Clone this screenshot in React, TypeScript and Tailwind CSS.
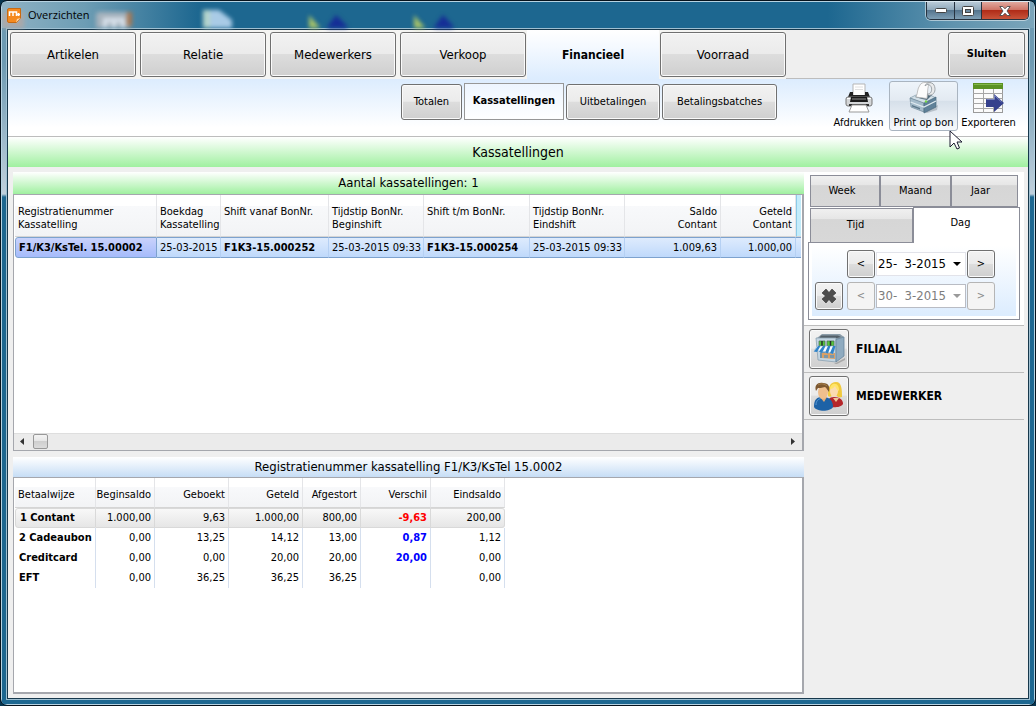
import { useState } from 'react'
import clsx from 'clsx'

const mainTabs = ['Artikelen', 'Relatie', 'Medewerkers', 'Verkoop', 'Financieel', 'Voorraad']

const subTabs = [
  { label: 'Totalen', width: 'w-[61px]' },
  { label: 'Kassatellingen', width: 'w-[100px]' },
  { label: 'Uitbetalingen', width: 'w-[94px]' },
  { label: 'Betalingsbatches', width: 'w-[115px]' },
]

const shiftColumns = [
  { lines: ['Registratienummer', 'Kassatelling'], width: 'w-[142px]', right: false },
  { lines: ['Boekdag', 'Kassatelling'], width: 'w-[64px]', right: false },
  { lines: ['Shift vanaf BonNr.'], width: 'w-[108px]', right: false },
  { lines: ['Tijdstip BonNr.', 'Beginshift'], width: 'w-[95px]', right: false },
  { lines: ['Shift t/m BonNr.'], width: 'w-[106px]', right: false },
  { lines: ['Tijdstip BonNr.', 'Eindshift'], width: 'w-[95px]', right: false },
  { lines: ['Saldo', 'Contant'], width: 'w-[96px]', right: true },
  { lines: ['Geteld', 'Contant'], width: 'w-[75px]', right: true },
]

const shift = [
  'F1/K3/KsTel. 15.00002',
  '25-03-2015',
  'F1K3-15.000252',
  '25-03-2015 09:33',
  'F1K3-15.000254',
  '25-03-2015 09:33',
  '1.009,63',
  '1.000,00',
]

const payColumns = [
  { label: 'Betaalwijze', width: 'w-[81px]' },
  { label: 'Beginsaldo', width: 'w-[59px]' },
  { label: 'Geboekt', width: 'w-[74px]' },
  { label: 'Geteld', width: 'w-[74px]' },
  { label: 'Afgestort', width: 'w-[58px]' },
  { label: 'Verschil', width: 'w-[70px]' },
  { label: 'Eindsaldo', width: 'w-[74px]' },
]

const payRows = [
  ['1 Contant', '1.000,00', '9,63', '1.000,00', '800,00', '-9,63', '200,00'],
  ['2 Cadeaubon', '0,00', '13,25', '14,12', '13,00', '0,87', '1,12'],
  ['Creditcard', '0,00', '0,00', '20,00', '20,00', '20,00', '0,00'],
  ['EFT', '0,00', '36,25', '36,25', '36,25', '', '0,00'],
]

const bevel =
  'rounded-[3px] border border-[#707070] bg-[linear-gradient(#f2f2f2,#ebebeb_48%,#dddddd_50%,#cfcfcf)] shadow-[inset_0_0_0_1px_#fafafa]'

function AppLogo() {
  return (
    <svg width="15" height="15" viewBox="0 0 15 15" aria-hidden="true">
      <path d="M2 .5h11.5v9.5l-4 4.5H2A1.5 1.5 0 0 1 .5 13V2A1.5 1.5 0 0 1 2 .5z" fill="#f58a1f" stroke="#c96a10" />
      <path d="M2.500 8V4h7v4M6 4v4M9.500 6.500H13M11.500 5v3" fill="none" stroke="#fff" strokeWidth="1.500" />
      <path d="M9 14.500 10 11l3.500-1z" fill="#ffd9a8" />
    </svg>
  )
}

// Desktop icons that shine through the glass title bar
function GlassBackdrop() {
  return (
    <svg className="absolute inset-x-0 top-0 h-full w-full blur-[2px]" aria-hidden="true">
      <rect x="0" y="10" width="22" height="20" fill="#b9a6a0" opacity=".7" />
      <path d="M94 28V13q0-3 4-3h26q4 0 4 4v14" fill="#a7b3bd" />
      <path d="M125 10h5v14h-5z" fill="#a8764f" />
      <path d="M103 28V18h18v10M112 18v10" fill="none" stroke="#dbe4ee" strokeWidth="4" />
      <path d="M201 28V8h16l13 10v10z" fill="#a9cbe6" />
      <path d="M201 28V8h7v20z" fill="#b5d5cc" />
      <path d="M307 13l13 15h-13z" fill="#a9c468" />
      <path d="M323 28l11-15 12 12-5 3z" fill="#152d96" />
      <path d="M412 13l13 15h-13z" fill="#a9c468" />
      <path d="M430 28l11-15 11 12-4 3z" fill="#152d96" />
    </svg>
  )
}

function PrinterIcon() {
  return (
    <svg width="28" height="30" viewBox="0 0 28 30" aria-hidden="true">
      <path d="M8 1h12v12H8z" fill="#fff" stroke="#b5b5b5" />
      <path d="M10 4h8M10 6.500h8" stroke="#e0e0e0" />
      <path d="M5 9h3v3h12V9h3l2 5H3z" fill="#222" />
      <rect x="1" y="14" width="26" height="9" rx="2" fill="#d4d6d8" stroke="#777" />
      <path d="M2 15.500h24" stroke="#fff" />
      <path d="M6 14h16l1 5H5z" fill="#1b1b1b" />
      <path d="M7 16h14" stroke="#8d8d8d" />
      <path d="M4 21h20v2H4z" fill="#333" />
      <path d="M7 22h14l3 7H4z" fill="#fff" stroke="#999" />
    </svg>
  )
}

function ReceiptPrinterIcon() {
  return (
    <svg width="30" height="32" viewBox="0 0 30 32" aria-hidden="true">
      <path d="M15 30l14-7-1 5-10 3z" fill="#8c98a1" opacity=".5" />
      <path d="M1 16l6-3h14l6 3-11 6z" fill="#d3e0e8" stroke="#8199a8" strokeWidth=".7" />
      <path d="M6 15l3-2h14l-5 5-5-1z" fill="#516b7b" />
      <path d="M1 16l14 5v9L2 25z" fill="#a5bccb" stroke="#6d8798" strokeWidth=".7" />
      <path d="M15 21l12-6v10l-12 6z" fill="#5f8199" stroke="#4b6a7e" strokeWidth=".7" />
      <path d="M1.500 20l13.500 5 12-6" fill="none" stroke="#dfeaf0" strokeWidth="1.200" />
      <path d="M3 23l8 3v1.500l-8-3z" fill="#5c7889" />
      <path d="M7 15c2-4 1-8 4-12 1-2 3-2.500 5-2.500h6c-4 2-3 9-4 16z" fill="#fcfcfc" stroke="#b3b3b3" strokeWidth=".8" />
      <path d="M16 4c1-4 7-4.500 9-1 2 4 1 9-3 10-2 .5-3 0-4-1 4 0 5-3 4.500-6-.5-3-4-5-6.500-2z" fill="#e9eaeb" stroke="#979da1" strokeWidth=".9" />
      <circle cx="17" cy="19.500" r="1.200" fill="#75d64a" />
    </svg>
  )
}

function ExportIcon() {
  return (
    <svg width="31" height="31" viewBox="0 0 31 31" aria-hidden="true">
      <rect x=".5" y=".5" width="29" height="29" fill="#fbfbfb" stroke="#9a9a9a" />
      <rect x="0" y="0" width="30" height="6" fill="#5b9222" />
      <path d="M1 1.500h28" stroke="#82b648" />
      <path d="M0 10.500h30M0 15.500h30M0 20.500h30M0 25.500h30M10.500 6v24M20.500 6v24" stroke="#a6a6a6" />
      <path d="M13 16h8v-5l10 9-10 9v-5h-8z" fill="#35408c" />
      <path d="M13.500 16.500h8v-4l7 6.500" fill="none" stroke="#7680bd" />
    </svg>
  )
}

function StoreIcon() {
  return (
    <svg width="32" height="32" viewBox="0 0 32 32" aria-hidden="true">
      <path d="M21 31l11-6v2l-8 4z" fill="#8a8a8a" opacity=".6" />
      <path d="M4 5l5-4h18l4 3-8 3z" fill="#8b9ca8" />
      <path d="M8 2.500h17l3 1.500-6 1.500H6z" fill="#535f68" />
      <path d="M3 5h20v24L5 27z" fill="#c3d5e2" stroke="#8aa1b1" strokeWidth=".8" />
      <path d="M23 6.500l8-2.500v19l-8 6z" fill="#8fabc0" stroke="#68879c" strokeWidth=".8" />
      <path d="M6 8h6v5H6zM14 8h7v5h-7z" fill="#57c63b" stroke="#4a6b58" strokeWidth=".7" />
      <path d="M9 8v5M17.500 8v5" stroke="#25302a" strokeWidth="1.500" />
      <path d="M7 18h5v7H7z" fill="#7393a8" />
      <path d="M9 20h13v6l-13-1z" fill="#d9a066" />
      <path d="M11 22h4v3h-4zM17 22h4v3h-4z" fill="#7d98a9" />
      <path d="M4 13h18l-2 8-3-1.500-3 .5-3-1.500-3 1-3-2-4 1z" fill="#f7fbff" stroke="#7ea7c8" strokeWidth=".5" />
      <path d="M5 13h2.500L4 19l-3-.5zM10 13h2.500L9 20l-3-1.500zM15 13h2.500L15 20.500l-3-1zM20 13h2.500L20 21l-3-1z" fill="#2f83c9" />
    </svg>
  )
}

function PeopleIcon() {
  return (
    <svg width="32" height="30" viewBox="0 0 32 30" aria-hidden="true">
      <path d="M14 25c0-6 2-9 7-9 6 0 9 3 9 7-2 4-12 4-16 2z" fill="#b5262a" />
      <path d="M20 17l3 4 3-4z" fill="#f1c897" />
      <path d="M15 15c0-9 2-14 8-14s6 8 6 15c-3 1-4 0-5-1h-5c-1 1-3 1-4 0z" fill="#f0c93d" />
      <ellipse cx="21" cy="10" rx="4" ry="6" fill="#fbdcb0" />
      <path d="M17 8c0-5 6-7 8-3 1 2 1 3 1 5-2-1-3-3-4-5-1 2-3 3-5 3z" fill="#ffe468" />
      <path d="M1 26c0-7 2-10 9-10s10 4 10 10c-3 5-16 5-19 0z" fill="#1d62a6" />
      <path d="M3 24c0-4 2-6 6-7" fill="none" stroke="#5c9bd6" />
      <path d="M7 16l4 5 3-5z" fill="#e5ad76" />
      <ellipse cx="10" cy="11" rx="5" ry="7" fill="#efbf8d" />
      <path d="M3 10C1 4 5 1 10 2c6 0 7 4 6 9-2-2-2-4-4-5-3 1-6 1-7 1z" fill="#7d5830" />
      <path d="M5 4c3-2 7-1 9 1" fill="none" stroke="#a8814c" />
    </svg>
  )
}

function ClearIcon() {
  return (
    <svg width="14" height="14" viewBox="0 0 14 14" aria-hidden="true">
      <path d="M4 0l3 3.500L10 0l4 4-3.500 3L14 10l-4 4-3-3.500L4 14l-4-4 3.500-3L0 4z" fill="#4d4d4d" stroke="#333" strokeWidth=".6" />
    </svg>
  )
}

function Pointer() {
  return (
    <svg className="pointer-events-none absolute top-[48px] left-[59px] z-10" width="13" height="20" viewBox="0 0 13 20" aria-hidden="true">
      <path d="M1 1v16l4-4 3 6 2.500-1L8 12h5z" fill="#fff" stroke="#1c1c30" />
    </svg>
  )
}

function TitleBar() {
  return (
    <header className="relative flex h-[26px] shrink-0 items-start justify-between bg-[linear-gradient(90deg,#8fb2c4,#6d9db4_8%,#1d6790_19%,#1d6790_80%,#5f93ae_92%,#7ba5ba)]">
      <GlassBackdrop />
      <div className="relative flex h-full items-center gap-1.5 pl-[5px] font-['Open_Sans','Noto_Sans',sans-serif] text-[11px] text-black">
        <AppLogo />
        <h1>Overzichten</h1>
      </div>
      <div className="relative mr-[5px] flex h-[18px] overflow-hidden rounded-b-[5px] border border-t-0 border-[#26323f] shadow-[0_0_0_1px_#ffffff80]">
        <button aria-label="Minimaliseren" className="flex w-[28px] items-center justify-center border-r border-[#26323f] bg-[linear-gradient(#b9cbd8,#90a9bb_45%,#55758e_50%,#7f9fb5)]">
          <svg width="12" height="5" viewBox="0 0 12 5"><rect x=".5" y=".5" width="11" height="4" rx="1" fill="#fff" stroke="#444" /></svg>
        </button>
        <button aria-label="Maximaliseren" className="flex w-[27px] items-center justify-center border-r border-[#26323f] bg-[linear-gradient(#b9cbd8,#90a9bb_45%,#55758e_50%,#7f9fb5)]">
          <svg width="12" height="10" viewBox="0 0 12 10">
            <rect x=".5" y=".5" width="11" height="9" rx="1" fill="#fff" stroke="#444" />
            <rect x="3.500" y="3.500" width="5" height="3" fill="#6d8aa0" stroke="#444" />
          </svg>
        </button>
        <button aria-label="Venster sluiten" className="flex w-[46px] items-center justify-center bg-[linear-gradient(#e0a99f,#cf7567_45%,#b02c18_50%,#c8543a)]">
          <svg width="12" height="10" viewBox="0 0 12 10">
            <path d="M.8.5h3L6 2.800 8.200.5h3L8 5l3.200 4.500h-3L6 7.200 3.800 9.500h-3L4 5z" fill="#fff" stroke="#4a4a4a" strokeWidth=".9" />
          </svg>
        </button>
      </div>
    </header>
  )
}

function ToolButton({ label, icon, hover }: { label: string; icon: React.ReactNode; hover?: boolean }) {
  return (
    <button
      className={clsx(
        'relative flex h-[50px] flex-col items-center justify-between rounded-[3px] border text-[11px] leading-[15px] whitespace-nowrap',
        hover ? 'w-[69px] border-[#a9b4c0] bg-[linear-gradient(#eef4fa,#e3eaf2_38%,#d6e0ea_40%,#f6f9fc)]' : 'w-[61px] border-transparent pt-px',
      )}
    >
      {icon}
      <span>{label}</span>
      {hover && <Pointer />}
    </button>
  )
}

function ShiftTable() {
  return (
    <div className="flex min-h-0 flex-1 flex-col border border-r-2 border-[#a5a7ad] bg-white">
      <div className="min-h-0 flex-1 overflow-hidden px-px">
        <table className="w-full table-fixed border-separate border-spacing-0 text-[11px] leading-[13px]">
          <thead>
            <tr className="h-[42px] bg-[linear-gradient(#fff_25%,#f8f9fb_26%,#f2f3f5)]">
              {shiftColumns.map((col, i) => (
                <th
                  key={i}
                  className={clsx(
                    col.width,
                    'border-r border-b border-r-[#e4e5e8] border-b-[#d5d5d5] px-[3px] pt-2.5 align-top font-normal whitespace-nowrap',
                    col.right ? 'text-right' : 'text-left',
                  )}
                >
                  {col.lines.map((line) => (
                    <div key={line}>{line}</div>
                  ))}
                </th>
              ))}
              <th className="border-b border-l border-b-[#d5d5d5] border-l-[#8ccbe8] bg-[#c3ecfb]" />
            </tr>
          </thead>
          <tbody>
            <tr className="h-[21px]">
              {shift.map((value, i) => (
                <td
                  key={i}
                  className={clsx(
                    'border-y border-r border-y-[#7da2ce] px-[3px] whitespace-nowrap',
                    i === 0
                      ? 'rounded-l-[3px] border-l border-l-[#7da2ce] border-r-[#7da2ce] bg-[linear-gradient(#c9d2fb,#a5bbfb)]'
                      : 'border-r-[#b5d0f3] bg-[linear-gradient(#deebfd,#bfd9fb)]',
                    (i === 0 || i === 2 || i === 4) && 'font-bold',
                    i >= 6 && 'text-right',
                  )}
                >
                  {value}
                </td>
              ))}
              <td className="border-y border-[#7da2ce] bg-[linear-gradient(#deebfd,#bfd9fb)]" />
            </tr>
          </tbody>
        </table>
      </div>
      <div className="flex h-[17px] items-center justify-between border-t border-[#dedede] bg-[#ebebeb] px-1.5">
        <div className="flex items-center gap-2">
          <button aria-label="Naar links" className="flex h-4 w-[5px] items-center">
            <svg width="4" height="7" viewBox="0 0 4 7"><path d="M4 0v7L0 3.500z" fill="#333" /></svg>
          </button>
          <div className="h-[15px] w-[15px] rounded-[2px] border border-[#989898] bg-[linear-gradient(#f4f4f4,#e6e6e6_48%,#cfcfcf_50%,#dcdcdc)]" />
        </div>
        <button aria-label="Naar rechts" className="flex h-4 w-[5px] items-center">
          <svg width="4" height="7" viewBox="0 0 4 7"><path d="M0 0v7l4-3.500z" fill="#333" /></svg>
        </button>
      </div>
    </div>
  )
}

function PaymentTable() {
  return (
    <div className="min-h-0 flex-1 overflow-hidden border border-r-2 border-b-2 border-[#a5a7ad] bg-white px-px">
      <table className="w-[490px] table-fixed border-separate border-spacing-0 text-[11px] leading-[13px]">
        <thead>
          <tr className="h-[30px] bg-[linear-gradient(#fff_30%,#f8f9fb_31%,#f2f3f5)]">
            {payColumns.map((col, i) => (
              <th
                key={col.label}
                className={clsx(
                  col.width,
                  'border-r border-b border-r-[#e4e5e8] border-b-[#d5d5d5] pt-1 pr-[3px] font-normal whitespace-nowrap',
                  i === 0 ? 'pl-[3px] text-left' : 'text-right',
                )}
              >
                {col.label}
              </th>
            ))}
          </tr>
        </thead>
        <tbody>
          {payRows.map((row, r) => (
            <tr key={row[0]} className="h-[20px]">
              {row.map((value, i) => (
                <td
                  key={i}
                  className={clsx(
                    'border-r pr-[3px] whitespace-nowrap',
                    i === 0 ? 'pl-1 text-left font-bold' : 'text-right',
                    i === 5 && (value.startsWith('-') ? 'font-bold text-[#ff0000]' : 'font-bold text-[#0000ff]'),
                    r === 0
                      ? 'border-y border-[#d9d9d9] bg-[linear-gradient(#f8f8f8,#e6e6e6)] first:rounded-l-[3px] first:border-l last:rounded-r-[3px]'
                      : 'border-[#d5dfee]',
                  )}
                >
                  {value}
                </td>
              ))}
            </tr>
          ))}
        </tbody>
      </table>
    </div>
  )
}

function DateRow({ label, value, disabled }: { label: string; value: string; disabled?: boolean }) {
  const [date, setDate] = useState(value)
  const step = clsx(
    'h-7 w-7 shrink-0 rounded-[3px] border text-[11px]',
    disabled ? 'border-[#b5b5b5] bg-[#f4f4f4] text-[#8a8a8a]' : bevel,
  )
  return (
    <div className="flex items-center gap-px">
      <button className={step} disabled={disabled} aria-label={`${label} eerder`}>&lt;</button>
      <div className={clsx('flex h-6 w-[90px] items-center border bg-white', disabled ? 'border-[#b9bcc4]' : 'border-[#e2e3ea]')}>
        <input
          aria-label={label}
          value={date}
          disabled={disabled}
          onChange={(e) => setDate(e.target.value)}
          className="w-[76px] bg-transparent pl-px text-[13px] text-black outline-none disabled:text-[#7d7d7d]"
        />
        <button disabled={disabled} aria-label={`${label} kiezen`} className="text-black disabled:text-[#9a9a9a]">
          <svg width="8" height="4" viewBox="0 0 8 4"><path d="M0 0h8L4 4z" fill="currentColor" /></svg>
        </button>
      </div>
      <button className={step} disabled={disabled} aria-label={`${label} later`}>&gt;</button>
    </div>
  )
}

function PeriodPanel() {
  const tab = 'border border-[#8b8d98] bg-[linear-gradient(#f0f0f0,#e6e6e6_30%,#d6d6d6_32%,#d8d8d8)] text-[11px]'
  return (
    <section className="border-b border-[#bdbdbd] bg-white pt-[3px] pr-1 pb-[5px] pl-1">
      <div role="tablist" className="ml-0.5">
        <div className="mr-0.5 flex h-[32px]">
          <button role="tab" className={clsx(tab, 'w-[71px] border-r-2 pr-1.5')}>Week</button>
          <button role="tab" className={clsx(tab, 'w-[71px] border-r-2 border-l-0')}>Maand</button>
          <button role="tab" className={clsx(tab, 'flex-1 border-l-0 pr-2')}>Jaar</button>
        </div>
        <div className="flex h-[35px] items-end">
          <button role="tab" className={clsx(tab, 'h-[34px] w-[103px] border-b-0 pr-3')}>Tijd</button>
          <button role="tab" aria-selected="true" className="z-10 -mb-px h-[36px] flex-1 border border-b-0 border-[#8b8d98] bg-white pr-3 pb-1 text-[11px]">
            Dag
          </button>
        </div>
      </div>
      <div className="border border-[#8b8d98] p-[3px]">
        <div className="flex items-end gap-1 bg-[linear-gradient(#fff,#dcecfe)] pt-1 pb-1.5 pl-[3px]">
          <button aria-label="Datum wissen" className={clsx(bevel, 'flex h-7 w-7 items-center justify-center')}>
            <ClearIcon />
          </button>
          <div className="flex flex-col gap-1">
            <DateRow label="Begindatum" value="25-  3-2015" />
            <DateRow label="Einddatum" value="30-  3-2015" disabled />
          </div>
        </div>
      </div>
    </section>
  )
}

function FilterRow({ label, icon }: { label: string; icon: React.ReactNode }) {
  return (
    <div className="flex h-[47px] items-center gap-[7px] border-b border-[#bdbdbd] pl-[5px] text-[12px] font-bold">
      <button aria-label={label} className={clsx(bevel, 'flex h-10 w-10 items-center justify-center')}>
        {icon}
      </button>
      <span>{label}</span>
    </div>
  )
}

export default function App() {
  const [activeMain, setActiveMain] = useState('Financieel')
  const [activeSub, setActiveSub] = useState('Kassatellingen')

  return (
    <div className="h-screen bg-[#07354f] font-['DejaVu_Sans_Condensed','DejaVu_Sans',sans-serif] text-black">
      <div className="flex h-full flex-col overflow-hidden rounded-[7px] border border-[#06121c] bg-[#1d6790] shadow-[inset_0_0_0_1px_#b7d3e2]">
        <div className="m-px flex min-h-0 flex-1 flex-col bg-[linear-gradient(#6d9ab2,#6d9ab2_60px,#c0d0dc_192px,#1d6790_195px)]">
          <TitleBar />
          <div className="mx-1 mb-1 flex min-h-0 flex-1 flex-col border border-[#9fc0d2]">
            <main className="flex min-h-0 flex-1 flex-col border border-[#17384c] bg-[#efefef]">
              <nav className="flex h-[49px] shrink-0 bg-[#efefef]">
                <div className="flex items-start gap-1 bg-[#f4f4f2] pt-0.5 pl-0.5">
                  {mainTabs.map((label) =>
                    label === activeMain ? (
                      <button key={label} className="-mx-[3px] -mt-0.5 h-[49px] w-[132px] bg-[linear-gradient(#fff,#f4f9ff_35%,#dcecfe)] text-[12px] font-bold">
                        {label}
                      </button>
                    ) : (
                      <button key={label} onClick={() => setActiveMain(label)} className={clsx(bevel, 'h-[45px] w-[126px] text-[13px]')}>
                        {label}
                      </button>
                    ),
                  )}
                </div>
                <div className="flex flex-1 justify-end border-b border-[#bdbdbd] pt-0.5 pr-[3px]">
                  <button className={clsx(bevel, 'h-[45px] w-[77px] text-[11px] font-bold')}>Sluiten</button>
                </div>
              </nav>

              <div className="flex h-[58px] shrink-0 items-start justify-between border-b border-[#bdbdbd] bg-[linear-gradient(#dcecfe,#fff_85%)] pl-[393px]">
                <div className="flex items-end gap-0.5 pt-1">
                  {subTabs.map((tab) =>
                    tab.label === activeSub ? (
                      <button key={tab.label} className={clsx(tab.width, 'h-[37px] border border-[#979797] bg-[linear-gradient(#edf5ff,#fff)] text-[11px] font-bold')}>
                        {tab.label}
                      </button>
                    ) : (
                      <button key={tab.label} onClick={() => setActiveSub(tab.label)} className={clsx(bevel, tab.width, 'h-9 text-[11px]')}>
                        {tab.label}
                      </button>
                    ),
                  )}
                </div>
                <div className="flex pt-0.5 pr-[9px]">
                  <ToolButton label="Afdrukken" icon={<PrinterIcon />} />
                  <ToolButton label="Print op bon" icon={<ReceiptPrinterIcon />} hover />
                  <ToolButton label="Exporteren" icon={<ExportIcon />} />
                </div>
              </div>

              <h2 className="flex h-[30px] shrink-0 items-center justify-center bg-[linear-gradient(#fff,#a0f0a0)] text-[14px]">Kassatellingen</h2>

              <div className="flex min-h-0 flex-1 pt-[5px] pr-1 pb-1 pl-[5px]">
                <div className="flex min-w-0 flex-1 flex-col gap-1.5">
                  <section className="flex min-h-0 flex-[278] flex-col">
                    <h3 className="flex h-[22px] items-center justify-center bg-[linear-gradient(#fff,#a0f0a0)] text-[13px]">Aantal kassatellingen: 1</h3>
                    <ShiftTable />
                  </section>
                  <section className="flex min-h-0 flex-[237] flex-col">
                    <h3 className="flex h-[20px] items-center justify-center bg-[linear-gradient(#fff,#c6ddf5)] text-[13px]">
                      Registratienummer kassatelling F1/K3/KsTel 15.0002
                    </h3>
                    <PaymentTable />
                  </section>
                </div>
                <aside className="w-[220px] shrink-0">
                  <PeriodPanel />
                  <FilterRow label="FILIAAL" icon={<StoreIcon />} />
                  <FilterRow label="MEDEWERKER" icon={<PeopleIcon />} />
                </aside>
              </div>
            </main>
          </div>
        </div>
      </div>
    </div>
  )
}
